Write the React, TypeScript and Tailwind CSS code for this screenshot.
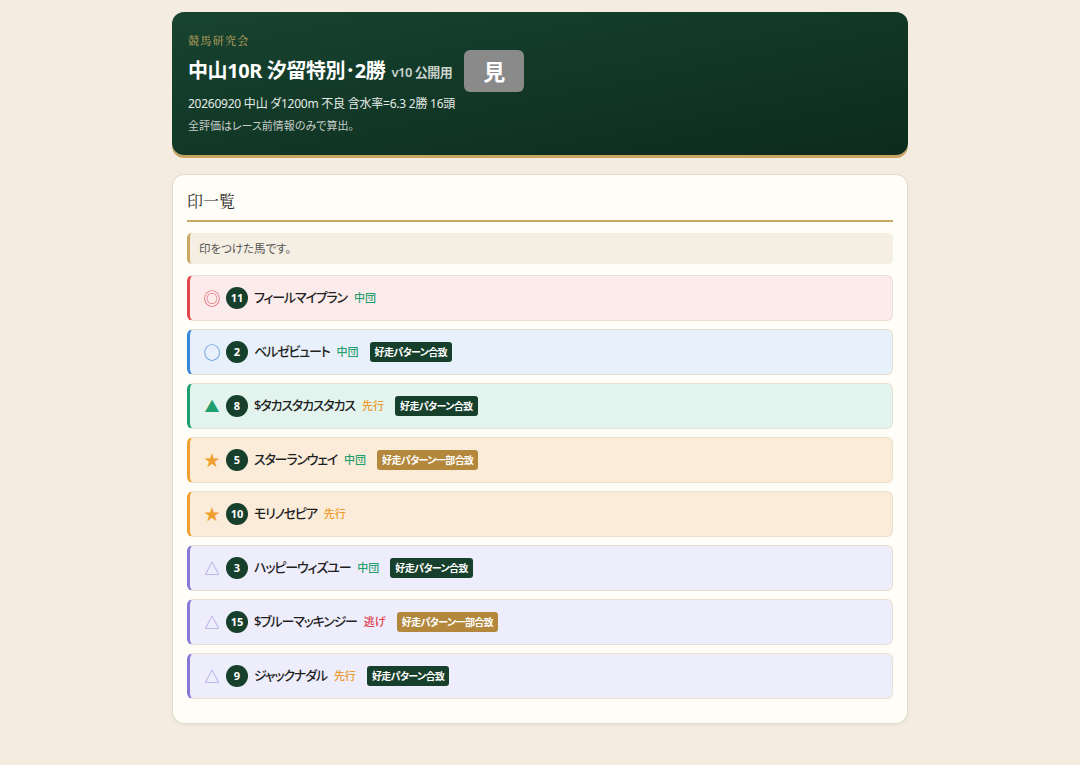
import React from "react";

type Row = {
  mark: string;
  markCls: string;
  num: string;
  name: string;
  style: string;
  styleCls: string;
  tag?: "full" | "partial";
  rowCls: string;
};

const rows: Row[] = [
  { mark: "◎", markCls: "text-[#e0505e] text-[17px]", num: "11", name: "フィールマイプラン", style: "中団", styleCls: "text-[#1f9e6e]", rowCls: "bg-[#fcebeb] border-l-[#e0474c]" },
  { mark: "○", markCls: "text-[#3a86d6] text-[17px]", num: "2", name: "ベルゼビュート", style: "中団", styleCls: "text-[#1f9e6e]", tag: "full", rowCls: "bg-[#e7f0fb] border-l-[#3a86d6]" },
  { mark: "▲", markCls: "text-[#1f9e6e] text-[15px]", num: "8", name: "$タカスタカスタカス", style: "先行", styleCls: "text-[#eb9a2e]", tag: "full", rowCls: "bg-[#e2f4ed] border-l-[#1f9e6e]" },
  { mark: "★", markCls: "text-[#f0a030] text-[16px]", num: "5", name: "スターランウェイ", style: "中団", styleCls: "text-[#1f9e6e]", tag: "partial", rowCls: "bg-[#fbecd9] border-l-[#f0a030]" },
  { mark: "★", markCls: "text-[#f0a030] text-[16px]", num: "10", name: "モリノセピア", style: "先行", styleCls: "text-[#eb9a2e]", rowCls: "bg-[#fbecd9] border-l-[#f0a030]" },
  { mark: "△", markCls: "text-[#9a90dd] text-[15px]", num: "3", name: "ハッピーウィズユー", style: "中団", styleCls: "text-[#1f9e6e]", tag: "full", rowCls: "bg-[#eeedfc] border-l-[#8878d8]" },
  { mark: "△", markCls: "text-[#9a90dd] text-[15px]", num: "15", name: "$ブルーマッキンジー", style: "逃げ", styleCls: "text-[#e0404e]", tag: "partial", rowCls: "bg-[#eeedfc] border-l-[#8878d8]" },
  { mark: "△", markCls: "text-[#9a90dd] text-[15px]", num: "9", name: "ジャックナダル", style: "先行", styleCls: "text-[#eb9a2e]", tag: "full", rowCls: "bg-[#eeedfc] border-l-[#8878d8]" },
];

export default function App() {
  return (
    <div className="min-h-[765px] bg-[#f4ece0] font-['Noto_Sans','Noto_Sans_CJK_JP',sans-serif] [font-feature-settings:'palt']">
      <div className="mx-auto w-[736px] pt-3 pb-10">
        <div className="rounded-[12px] bg-gradient-to-br from-[#174430] to-[#0d2b1d] px-4 pt-[20px] pb-[21px] shadow-[0_3px_0_#c9a560]">
          <div className="font-['Noto_Serif_CJK_JP','DejaVu_Serif',serif] text-[11px] leading-[16px] tracking-[0.12em] text-[#c9a961]">
            競馬研究会
          </div>
          <div className="mt-[2px] flex h-[42px] items-center">
            <span className="text-[20px] font-bold tracking-[-0.02em] text-white">中山10R 汐留特別･2勝</span>
            <span className="ml-[6px] mt-[3px] text-[13px] font-semibold tracking-[-0.04em] text-[#c9d2cc]">v10 公開用</span>
            <span className="ml-[12px] flex h-[42px] w-[60px] items-center justify-center rounded-[6px] bg-[#8a8a8a] text-[22px] font-bold text-white">
              見
            </span>
          </div>
          <div className="mt-[4px] text-[12px] leading-[16px] tracking-[-0.02em] text-[#e4ebe6]">
            20260920 中山 ダ1200m 不良 含水率=6.3 2勝 16頭
          </div>
          <div className="mt-[6px] text-[11px] leading-[16px] text-[#c5cdc7]">
            全評価はレース前情報のみで算出。
          </div>
        </div>

        <div className="mt-[19px] rounded-[12px] border border-[#e4dbcb] bg-[#fffdf7] px-[14px] pt-[14px] pb-[24px] shadow-[0_1px_3px_rgba(0,0,0,0.06)]">
          <div className="border-b-2 border-[#c9a961] pb-[7px] font-['Noto_Serif_CJK_JP','DejaVu_Serif',serif] text-[16px] leading-[24px] text-[#2a2a2a]">
            印一覧
          </div>
          <div className="mt-[11px] flex h-[31px] items-center rounded-[5px] border-l-[3px] border-[#c9a961] bg-[#f5efe3] pl-[9px] text-[11.5px] text-[#555]">
            印をつけた馬です。
          </div>
          <div className="mt-[11px] flex flex-col gap-[8px]">
            {rows.map((r, i) => (
              <div
                key={i}
                className={`flex h-[46px] items-center rounded-[6px] border border-[#eadfcf] border-l-[3px] pl-[14px] ${r.rowCls}`}
              >
                <span className={`flex w-[16px] justify-center leading-none ${r.markCls}`}>{r.mark}</span>
                <span className="ml-[6px] flex h-[22px] w-[22px] items-center justify-center rounded-full bg-[#17402c] text-[11px] font-bold text-white">
                  {r.num}
                </span>
                <span className="ml-[6px] text-[13px] font-medium tracking-[-0.09em] text-[#1f1f1f]">{r.name}</span>
                <span className={`ml-[7px] text-[11px] font-medium ${r.styleCls}`}>{r.style}</span>
                {r.tag && (
                  <span
                    className={`ml-[11px] flex h-[20px] items-center rounded-[3px] px-[5px] text-[10px] font-bold tracking-[-0.06em] text-white ${
                      r.tag === "full" ? "bg-[#17402c]" : "bg-[#b3883d]"
                    }`}
                  >
                    {r.tag === "full" ? "好走パターン合致" : "好走パターン一部合致"}
                  </span>
                )}
              </div>
            ))}
          </div>
        </div>
      </div>
    </div>
  );
}
